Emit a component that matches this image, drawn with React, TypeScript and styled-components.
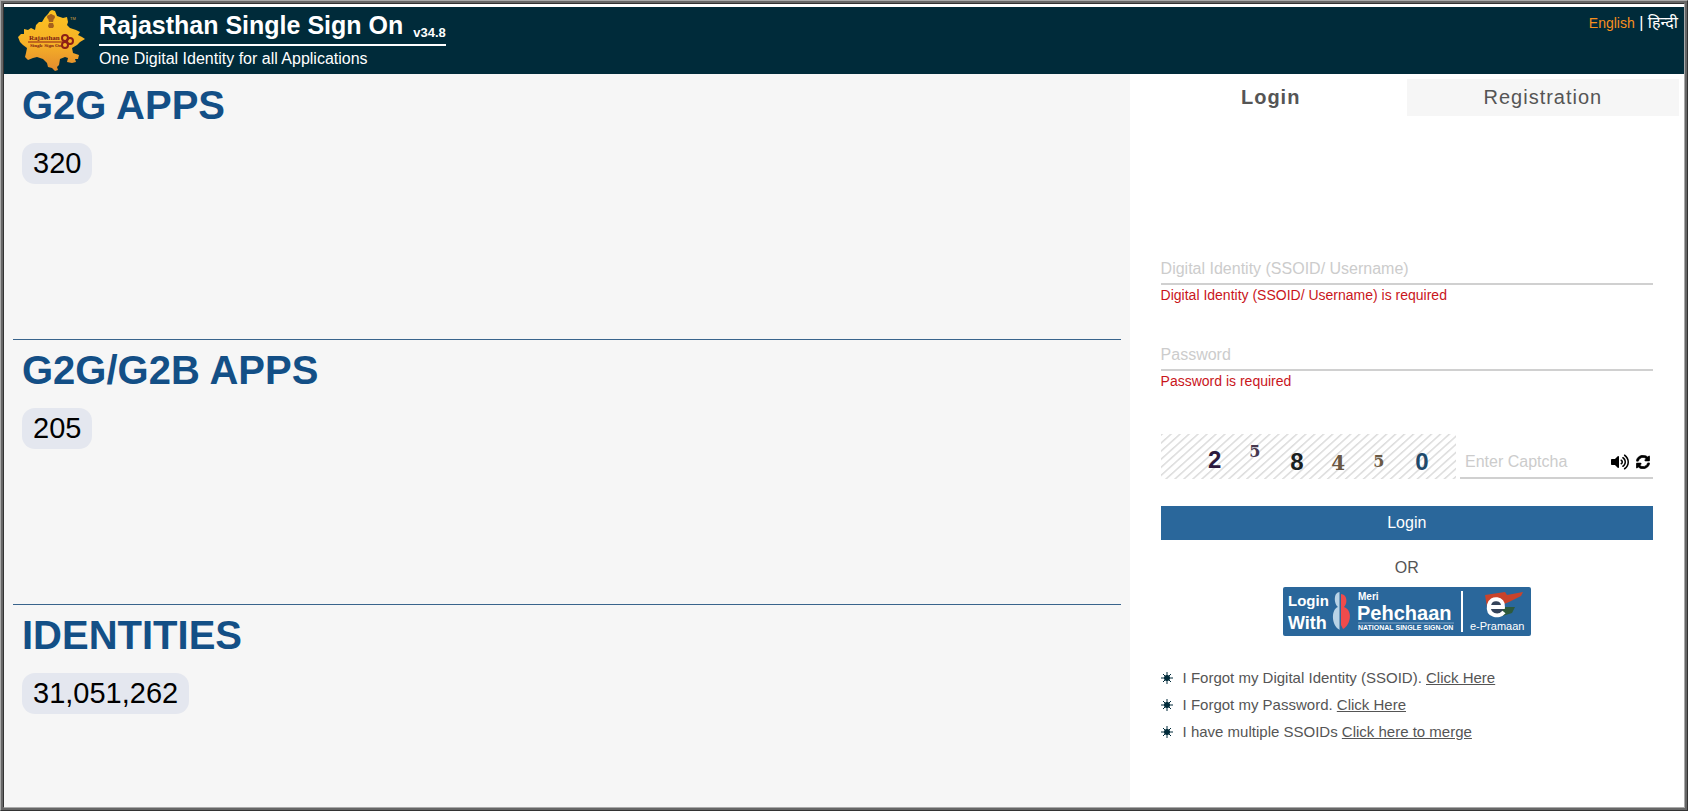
import React from "react";
import styled, { createGlobalStyle } from "styled-components";
import { FaVolumeUp, FaSyncAlt } from "react-icons/fa";

const Global = createGlobalStyle`
  *, *::before, *::after { box-sizing: border-box; }
  body {
    margin: 0;
    font-family: "Liberation Sans", Arial, "Noto Sans", sans-serif;
    font-size: 16px;
    color: #555;
    background: #fff;
  }
`;

const Frame = styled.div`
  min-height: 100vh;
  display: flex;
  padding: 2px;
  background: #666;
  border: 1px solid;
  border-color: #aaa #333 #333 #aaa;
`;

const Page = styled.div`
  flex: 1;
  display: flex;
  flex-direction: column;
  background: #fff;
  border: 1px solid;
  border-color: #333 #aaa #aaa #333;
`;

const Header = styled.header`
  display: flex;
  align-items: flex-start;
  height: 67px;
  margin-top: 3px;
  padding: 0 6px 0 13px;
  background: #002b3a;
  color: #fff;
`;

const Logo = styled.svg`
  width: 70px;
  height: 64px;
  margin: 2px 12px 0 0;
`;

const Brand = styled.div`
  display: flex;
  flex-direction: column;
`;

const TitleRow = styled.div`
  display: flex;
  align-items: flex-end;
  gap: 10px;
  height: 39px;
  border-bottom: 2px solid #fff;
`;

const Title = styled.h1`
  margin: 0;
  font-size: 25px;
  line-height: 38px;
`;

const Version = styled.span`
  font-size: 13px;
  font-weight: bold;
  line-height: 22px;
`;

const Subtitle = styled.p`
  margin: 0;
  font-size: 16px;
  line-height: 26px;
`;

const Languages = styled.nav`
  margin-left: auto;
  font-size: 16px;
  line-height: 32px;
`;

const Language = styled.a<{ $current?: boolean }>`
  color: ${(p) => (p.$current ? "#f78f1e" : "#fff")};
  font-size: ${(p) => (p.$current ? "14px" : "16px")};
  text-decoration: none;
`;

const Main = styled.main`
  flex: 1;
  display: grid;
  grid-template-columns: 67fr 33fr;
`;

const Stats = styled.div`
  display: flex;
  flex-direction: column;
  padding: 1px 9px 0;
  background: #f6f6f6;
`;

const Stat = styled.section`
  min-height: 265px;
  padding: 6px 9px;
  border-bottom: 1px solid #39648c;
  &:last-child {
    flex: 1;
    min-height: 0;
    border-bottom: 0;
  }
`;

const StatName = styled.h2`
  margin: 0 0 14px;
  font-size: 40px;
  line-height: 48px;
  color: #134f86;
`;

const StatValue = styled.span`
  display: inline-block;
  padding: 0 11px;
  border-radius: 13px;
  background: #e4e7ef;
  color: #000;
  font-size: 29px;
  line-height: 41px;
`;

const Side = styled.div`
  padding: 5px;
`;

const Tabs = styled.div`
  display: grid;
  grid-template-columns: 1fr 1fr;
`;

const Tab = styled.button<{ $active?: boolean }>`
  height: 37px;
  padding: 0;
  border: 0;
  background: ${(p) => (p.$active ? "#fff" : "#f6f6f6")};
  color: #555;
  font-family: inherit;
  font-size: 20px;
  font-weight: ${(p) => (p.$active ? "bold" : "normal")};
  letter-spacing: 1px;
`;

const Form = styled.form`
  display: flex;
  flex-direction: column;
  padding: 135px 26px 0;
`;

const Field = styled.div`
  height: 86px;
`;

const Input = styled.input`
  display: block;
  width: 100%;
  height: 34px;
  padding: 3px 0 0;
  border: 0;
  border-bottom: 2px solid #d0d0d0;
  background: transparent;
  color: #333;
  font-family: inherit;
  font-size: 16px;
  outline: none;
  &::placeholder {
    color: #ccc;
    opacity: 1;
  }
`;

const FieldError = styled.p`
  margin: 0;
  color: #c9151b;
  font-size: 14px;
  line-height: 20px;
`;

const CaptchaRow = styled.div`
  display: flex;
  align-items: flex-end;
  gap: 4px;
  margin: 11px 0 27px;
`;

const CaptchaImage = styled.svg`
  flex: none;
  width: 60%;
  height: 45px;
`;

const CaptchaEntry = styled.div`
  flex: 1;
  min-width: 0;
  display: flex;
  align-items: center;
  gap: 7px;
  height: 34px;
  padding: 2px 3px 0 5px;
  border-bottom: 2px solid #d0d0d0;
`;

const CaptchaInput = styled(Input)`
  flex: 1;
  min-width: 0;
  padding: 0;
  border: 0;
`;

const IconButton = styled.button`
  display: flex;
  padding: 0;
  border: 0;
  background: none;
  color: #000;
`;

const Submit = styled.button`
  height: 34px;
  padding: 0;
  border: 0;
  background: #2a679b;
  color: #fff;
  font-family: inherit;
  font-size: 16px;
`;

const Or = styled.p`
  margin: 18px 0 9px;
  text-align: center;
  line-height: 20px;
`;

const Partner = styled.button`
  align-self: center;
  display: block;
  padding: 0;
  border: 0;
  background: none;
  svg { display: block; }
`;

const Help = styled.ul`
  margin: 0;
  padding: 28px 26px 0;
  list-style: none;
  font-size: 15px;
  line-height: 27px;
`;

const HelpItem = styled.li`
  display: flex;
  align-items: center;
  gap: 10px;
`;

const HelpLink = styled.a`
  color: inherit;
`;

const stats = [
  { name: "G2G APPS", value: "320" },
  { name: "G2G/G2B APPS", value: "205" },
  { name: "IDENTITIES", value: "31,051,262" },
];

const help = [
  { text: "I Forgot my Digital Identity (SSOID).", link: "Click Here" },
  { text: "I Forgot my Password.", link: "Click Here" },
  { text: "I have multiple SSOIDs", link: "Click here to merge" },
];

const StateLogo = () => (
  <Logo viewBox="0 0 70 64" role="img" aria-label="Rajasthan Single Sign On">
    <defs>
      <linearGradient id="gold" x1="0" y1="0" x2="0" y2="1">
        <stop offset="0" stopColor="#fcc320" />
        <stop offset="0.55" stopColor="#f6b127" />
        <stop offset="1" stopColor="#e28a2e" />
      </linearGradient>
    </defs>
    <path
      d="M33 2 L35 1 L38 2 L40 7 L46 9 L50 8 L51 13 L50 16 L53 19 L59 21 L63 23 L61 26 L65 28 L68 30 L63 33 L60 36 L55 39 L56 44 L62 46 L61 50 L58 50 L59 53 L55 54 L50 53 L51 49 L48 48 L43 50 L42 56 L40 58 L41 61 L38 62 L35 59 L31 58 L30 54 L26 50 L20 48 L16 49 L11 51 L8 48 L9 44 L10 39 L6 36 L3 33 L1 28 L4 25 L7 25 L7 20 L11 21 L14 19 L18 21 L19 16 L22 13 L25 13 L28 8 L31 5 Z"
      fill="url(#gold)"
    />
    <g fill="#a4601d">
      <circle cx="32" cy="8" r="2" />
      <circle cx="34" cy="7" r="2" />
      <circle cx="36" cy="8" r="2" />
      <path d="M31 9 h6 l-1 4 h-4z M32 14 h4 l1 3 l-1 2 h-4 l-1 -2z" />
    </g>
    <text x="12" y="31" fontFamily="Liberation Serif, serif" fontWeight="bold" fontSize="7" fill="#7b2014">Rajasthan</text>
    <text x="13" y="38" fontFamily="Liberation Serif, serif" fontWeight="bold" fontSize="5" fill="#7b2014">Single Sign On</text>
    <g fill="none" stroke="#8d1f16" strokeWidth="2">
      <path d="M11 33 H46" strokeWidth="1" />
      <circle cx="48" cy="29" r="3" />
      <circle cx="48" cy="36" r="3" />
      <circle cx="53" cy="32" r="3" />
    </g>
    <text x="53" y="11" fontFamily="Liberation Sans, sans-serif" fontSize="4" fill="#d9a441">TM</text>
  </Logo>
);

const CaptchaPicture = () => (
  <CaptchaImage viewBox="0 0 295 45" preserveAspectRatio="none" role="img" aria-label="Captcha">
    <defs>
      <pattern id="hatch" width="6" height="6" patternUnits="userSpaceOnUse" patternTransform="rotate(48)">
        <rect width="6" height="6" fill="#fff" />
        <rect width="1.5" height="6" fill="#dcdcdc" />
      </pattern>
    </defs>
    <rect width="295" height="45" fill="url(#hatch)" />
    <g fontWeight="bold" fontFamily="Liberation Sans, sans-serif" fontSize="24">
      <text x="47" y="34" fill="#2c1a3d">2</text>
      <text x="88" y="23" fontSize="16" fontFamily="DejaVu Serif, serif" fill="#47384f">5</text>
      <text x="129" y="36" fill="#1a2020">8</text>
      <text x="170" y="36" fontSize="20" fontFamily="DejaVu Serif, serif" fill="#6a5743">4</text>
      <text x="212" y="33" fontSize="16" fontFamily="DejaVu Serif, serif" fill="#6b5a45">5</text>
      <text x="254" y="36" fill="#1f4a6b">0</text>
    </g>
  </CaptchaImage>
);

const PehchaanBanner = () => (
  <svg width="248" height="49" viewBox="0 0 248 49" role="img" aria-label="Login with Meri Pehchaan and e-Pramaan">
    <rect width="248" height="49" rx="2" fill="#2a679b" />
    <g fill="#fff" fontFamily="Liberation Sans, sans-serif" fontWeight="bold">
      <text x="5" y="19" fontSize="15">Login</text>
      <text x="5" y="42" fontSize="18">With</text>
      <text x="75" y="13" fontSize="10">Meri</text>
      <text x="74" y="33" fontSize="20">Pehchaan</text>
      <text x="75" y="43" fontSize="7">NATIONAL SINGLE SIGN-ON</text>
    </g>
    <path d="M75 36 H171" stroke="#7fa6c6" strokeWidth="1" />
    <path d="M57 5 C50 5 51 17 55 20 C48 22 48 39 57 43 Z" fill="#b9d3e6" />
    <path d="M58 7 C64 7 65 16 61 20 C70 23 68 38 60 42 L58 38 Z" fill="#ef4b4c" />
    <path d="M57 4 V44" stroke="#2a679b" strokeWidth="1" />
    <path d="M179 4 V45" stroke="#fff" strokeWidth="2" />
    <path d="M202 8 L222 5 L224 8 L240 5 L238 9 L226 15 L214 20 L204 20 Z" fill="#c9432b" />
    <path d="M212 20 L232 20 L229 26 L216 30 L207 28 Z" fill="#2d5a3c" />
    <circle cx="213" cy="19" r="8" fill="#34435a" />
    <path d="M206 20 H220 C221 11 208 9 206 18 C204 29 216 31 221 25" fill="none" stroke="#fff" strokeWidth="4" />
    <text x="187" y="43" fontFamily="Liberation Sans, sans-serif" fontSize="11" fill="#fff">e-Pramaan</text>
  </svg>
);

const SunBullet = () => (
  <svg width="12" height="12" viewBox="0 0 12 12" aria-hidden="true">
    <circle cx="6" cy="6" r="3" fill="#002b3a" />
    <path d="M6 0V12M0 6H12M2 2L10 10M10 2L2 10" stroke="#002b3a" strokeWidth="1" />
  </svg>
);

export default function App() {
  return (
    <Frame>
      <Global />
      <Page>
        <Header>
          <StateLogo />
          <Brand>
            <TitleRow>
              <Title>Rajasthan Single Sign On</Title>
              <Version>v34.8</Version>
            </TitleRow>
            <Subtitle>One Digital Identity for all Applications</Subtitle>
          </Brand>
          <Languages aria-label="Language">
            <Language href="#en" $current>English</Language> | <Language href="#hi" lang="hi">हिन्दी</Language>
          </Languages>
        </Header>
        <Main>
          <Stats>
            {stats.map((s) => (
              <Stat key={s.name}>
                <StatName>{s.name}</StatName>
                <StatValue>{s.value}</StatValue>
              </Stat>
            ))}
          </Stats>
          <Side>
            <Tabs role="tablist">
              <Tab type="button" role="tab" aria-selected="true" $active>Login</Tab>
              <Tab type="button" role="tab" aria-selected="false">Registration</Tab>
            </Tabs>
            <Form onSubmit={(e) => e.preventDefault()}>
              <Field>
                <Input id="ssoid" aria-label="Digital Identity (SSOID/ Username)" aria-describedby="ssoid-error" placeholder="Digital Identity (SSOID/ Username)" />
                <FieldError id="ssoid-error">Digital Identity (SSOID/ Username) is required</FieldError>
              </Field>
              <Field>
                <Input id="password" type="password" aria-label="Password" aria-describedby="password-error" placeholder="Password" />
                <FieldError id="password-error">Password is required</FieldError>
              </Field>
              <CaptchaRow>
                <CaptchaPicture />
                <CaptchaEntry>
                  <CaptchaInput aria-label="Enter Captcha" placeholder="Enter Captcha" />
                  <IconButton type="button" aria-label="Play captcha audio"><FaVolumeUp size={18} /></IconButton>
                  <IconButton type="button" aria-label="Refresh captcha"><FaSyncAlt size={14} stroke="#000" strokeWidth={24} /></IconButton>
                </CaptchaEntry>
              </CaptchaRow>
              <Submit type="submit">Login</Submit>
              <Or>OR</Or>
              <Partner type="button"><PehchaanBanner /></Partner>
            </Form>
            <Help>
              {help.map((h) => (
                <HelpItem key={h.text}>
                  <SunBullet />
                  <span>{h.text} <HelpLink href="#help">{h.link}</HelpLink></span>
                </HelpItem>
              ))}
            </Help>
          </Side>
        </Main>
      </Page>
    </Frame>
  );
}
